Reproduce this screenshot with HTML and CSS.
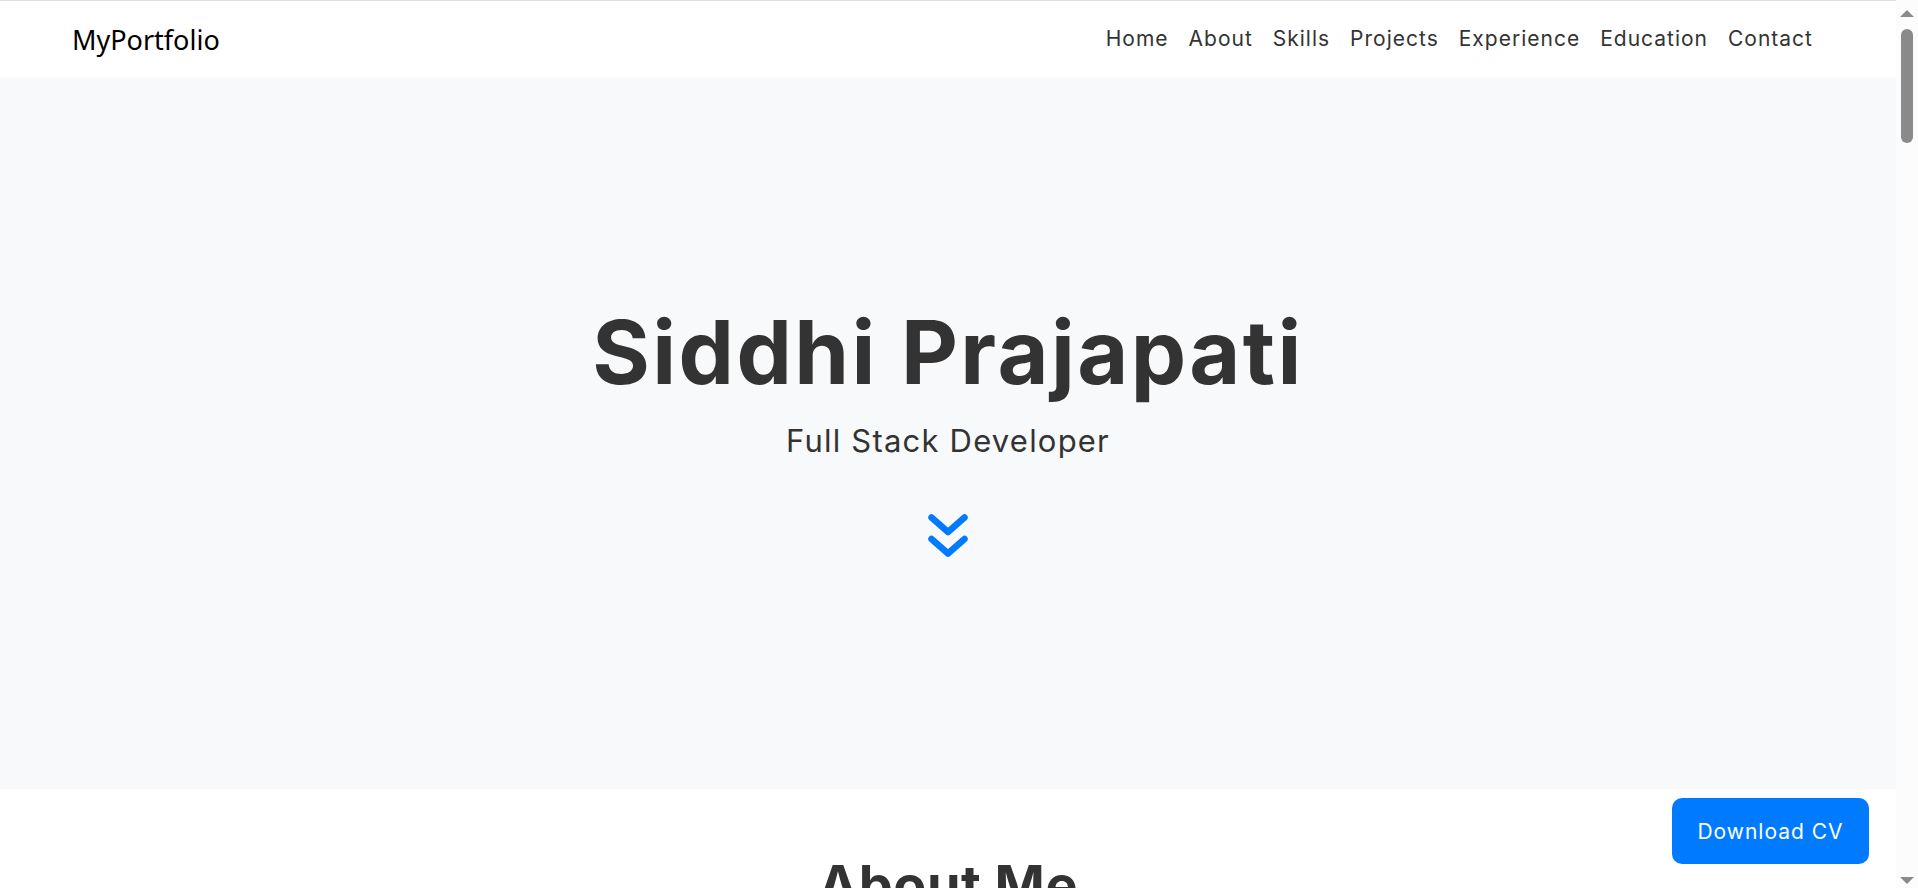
FILE: index.html
```html
<!DOCTYPE html>
<html lang="en">
<head>
<meta charset="utf-8">
<title>Siddhi Prajapati | Portfolio</title>
<link rel="stylesheet" href="styles.css">
</head>
<body>
<div class="page">
  <header class="navbar">
    <a class="brand" href="#home">MyPortfolio</a>
    <nav>
      <ul class="nav-links">
        <li><a href="#home">Home</a></li>
        <li><a href="#about">About</a></li>
        <li><a href="#skills">Skills</a></li>
        <li><a href="#projects">Projects</a></li>
        <li><a href="#experience">Experience</a></li>
        <li><a href="#education">Education</a></li>
        <li><a href="#contact">Contact</a></li>
      </ul>
    </nav>
  </header>

  <section class="hero" id="home">
    <h1 class="hero-title">Siddhi Prajapati</h1>
    <p class="hero-subtitle">Full Stack Developer</p>
    <a class="scroll-down" href="#about" aria-label="Scroll down">
      <svg width="40" height="44" viewBox="0 0 40 44">
        <path d="M3.5 3.5 L20 18 L36.5 3.5 M3.5 25 L20 39.5 L36.5 25" fill="none" stroke="#007bff" stroke-width="6.5" stroke-linecap="round" stroke-linejoin="round"/>
      </svg>
    </a>
  </section>

  <section class="about" id="about">
    <h2 class="section-title">About Me</h2>
    <p class="about-text">I am a passionate Full Stack Developer who enjoys building clean, responsive and user-friendly web applications.</p>
  </section>
</div>

<a class="download-btn" href="#">Download CV</a>

<div class="scrollbar" aria-hidden="true">
  <span class="scroll-arrow up"></span>
  <span class="scroll-thumb"></span>
  <span class="scroll-spacer"></span>
  <span class="scroll-arrow down"></span>
</div>
</body>
</html>
```

FILE: styles.css
```css
html, body {
  margin: 0;
  padding: 0;
}

body {
  font-family: "Inter", "Open Sans", sans-serif;
  color: #333;
  background: #fff;
}

.page {
  margin-right: 22px;
}

a {
  text-decoration: none;
}

/* Navbar */
.navbar {
  box-sizing: border-box;
  height: 77px;
  border-top: 1px solid #dedede;
  background: #fff;
  display: flex;
  align-items: center;
  justify-content: space-between;
  padding: 0 73px 0 72px;
}

.brand {
  font-family: "Noto Sans", "Open Sans", sans-serif;
  font-size: 27px;
  color: #000;
  line-height: 1;
}

.nav-links {
  list-style: none;
  margin: 0;
  padding: 0;
  display: flex;
  align-items: center;
}

.nav-links a {
  display: block;
  padding: 0 10px;
  font-size: 21px;
  letter-spacing: 1px;
  color: #333;
  line-height: 1.2;
}

/* Hero */
.hero {
  height: 712px;
  background: #f8f9fa;
  display: flex;
  flex-direction: column;
  align-items: center;
  justify-content: center;
  text-align: center;
}

.hero-title {
  margin: 0;
  font-size: 88px;
  line-height: 88px;
  font-weight: 700;
  letter-spacing: 2.4px;
  color: #333;
}

.hero-subtitle {
  margin: 26px 0 0;
  font-size: 31px;
  line-height: 37px;
  letter-spacing: 1.2px;
  color: #333;
}

.scroll-down {
  display: block;
  margin-top: 55px;
  height: 44px;
}

.scroll-down svg {
  display: block;
}

/* About */
.about {
  padding-top: 63px;
  min-height: 5190px;
  text-align: center;
}

.section-title {
  margin: 0;
  font-size: 54px;
  line-height: 65px;
  font-weight: 700;
  color: #333;
  letter-spacing: 0.5px;
}

.about-text {
  max-width: 900px;
  margin: 30px auto 0;
  font-size: 20px;
  line-height: 1.6;
  color: #555;
}

/* Floating download button */
.download-btn {
  position: fixed;
  right: 49px;
  bottom: 24px;
  width: 197px;
  height: 66px;
  display: flex;
  align-items: center;
  justify-content: center;
  background: #007bff;
  color: #fff;
  border-radius: 10px;
  font-size: 21px;
  letter-spacing: 1px;
}

/* Browser scrollbar (drawn, since the capture hides the native one) */
.scrollbar {
  position: fixed;
  top: 0;
  right: 0;
  width: 22px;
  height: 100vh;
  box-sizing: border-box;
  padding: 10px 0 4px;
  background: #fcfcfc;
  display: flex;
  flex-direction: column;
  align-items: center;
}

.scroll-arrow {
  width: 0;
  height: 0;
  border-left: 7px solid transparent;
  border-right: 7px solid transparent;
}

.scroll-arrow.up {
  border-bottom: 7px solid #8a8a8a;
}

.scroll-arrow.down {
  border-top: 7px solid #8a8a8a;
}

.scroll-thumb {
  margin-top: 12px;
  width: 12px;
  height: 114px;
  border-radius: 6px;
  background: #8a8a8a;
}

.scroll-spacer {
  flex: 1;
}
```
